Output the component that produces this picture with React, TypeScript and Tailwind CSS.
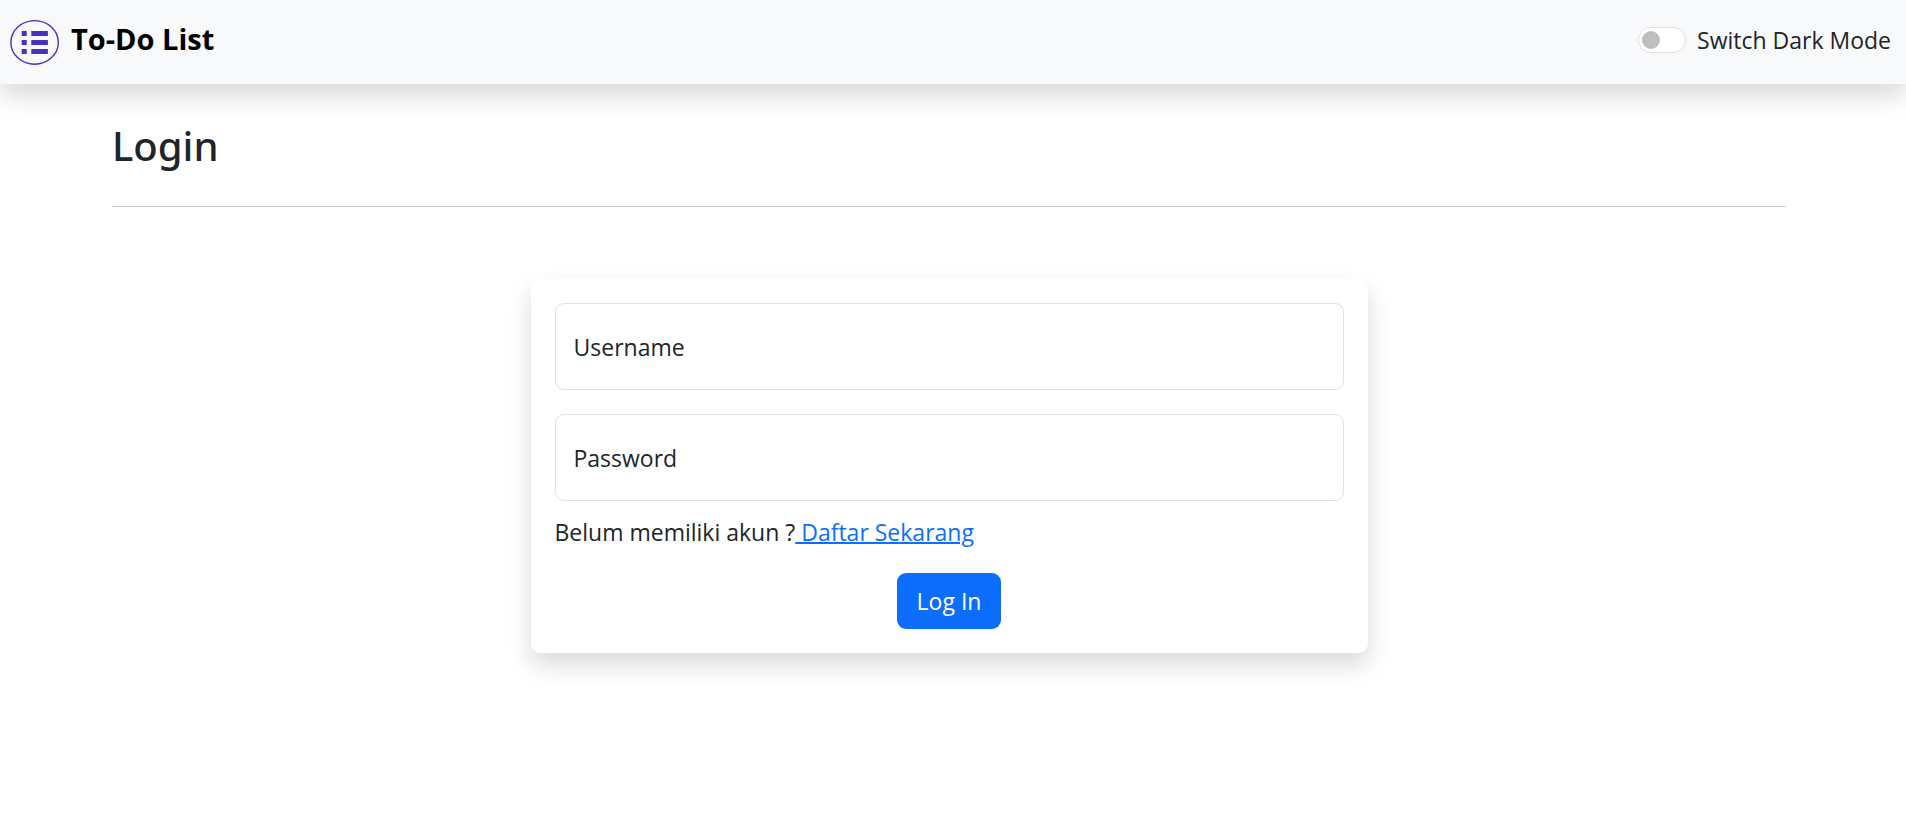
import { useState } from "react";

function ListLogo() {
  return (
    <svg width="50" height="46" viewBox="0 0 50 46" fill="none" aria-hidden="true">
      <ellipse cx="24.6" cy="23.4" rx="23.7" ry="21.8" stroke="#4a2fc0" strokeWidth="1.4" />
      <g fill="#4a2fc0">
        <rect x="11.7" y="12" width="5" height="5" />
        <rect x="21.3" y="12" width="16.6" height="5" />
        <rect x="11.7" y="21" width="5" height="5" />
        <rect x="21.3" y="21" width="16.6" height="5" />
        <rect x="11.7" y="30" width="5" height="5" />
        <rect x="21.3" y="30" width="16.6" height="5" />
      </g>
    </svg>
  );
}

function Field({ id, type, label }: { id: string; type: string; label: string }) {
  const [value, setValue] = useState("");
  return (
    <div className="grid">
      <input
        id={id}
        type={type}
        value={value}
        onChange={(event) => setValue(event.target.value)}
        className="col-start-1 row-start-1 h-[87px] rounded-[9px] border border-[#dee2e6] bg-white px-[18px] pt-6 outline-none focus:border-[#86b7fe]"
      />
      <label
        htmlFor={id}
        className={
          value
            ? "pointer-events-none col-start-1 row-start-1 px-[19px] pt-2 text-sm"
            : "pointer-events-none col-start-1 row-start-1 self-center px-[19px]"
        }
      >
        {label}
      </label>
    </div>
  );
}

export default function App() {
  return (
    <div className="font-['Open_Sans','Noto_Sans',sans-serif] text-[23px] leading-9 text-[#212529]">
      <header className="flex h-[84px] items-center justify-between bg-[#f8f9fa] pr-[15px] pl-[10px] shadow-[0_12px_24px_rgba(0,0,0,0.15)]">
        <a href="#" className="flex items-center gap-[11px] text-[29px] font-bold text-black">
          <ListLogo />
          <span className="pb-[6px]">To-Do List</span>
        </a>
        <div className="flex items-center gap-[11px] pb-1">
          <input
            id="dark-mode"
            type="checkbox"
            role="switch"
            className="flex h-[26px] w-12 appearance-none items-center rounded-full border border-[#dee2e6] bg-white px-[3px] before:size-[18px] before:rounded-full before:bg-[#bfbfbf] checked:justify-end checked:bg-[#0d6efd] checked:before:bg-white"
          />
          <label htmlFor="dark-mode">Switch Dark Mode</label>
        </div>
      </header>

      <main className="pt-[37px] pr-[120px] pb-24 pl-28">
        <h1 className="font-['Noto_Sans',sans-serif] text-[40px] leading-[50px] font-medium">Login</h1>
        <hr className="mt-[35px] border-[#c8c9ca]" />
        <form
          className="mx-auto mt-[72px] flex w-1/2 flex-col rounded-[9px] bg-white p-6 shadow-[0_12px_24px_rgba(0,0,0,0.15)]"
          onSubmit={(event) => event.preventDefault()}
        >
          <div className="flex flex-col gap-6">
            <Field id="username" type="text" label="Username" />
            <Field id="password" type="password" label="Password" />
          </div>
          <p className="mt-[13px] whitespace-pre">
            Belum memiliki akun ?
            <a href="#" className="text-[#0d6efd] underline decoration-2">
              {" Daftar Sekarang"}
            </a>
          </p>
          <button type="submit" className="mt-[23px] h-14 self-center rounded-[9px] bg-[#0d6efd] px-5 text-white">
            Log In
          </button>
        </form>
      </main>
    </div>
  );
}
